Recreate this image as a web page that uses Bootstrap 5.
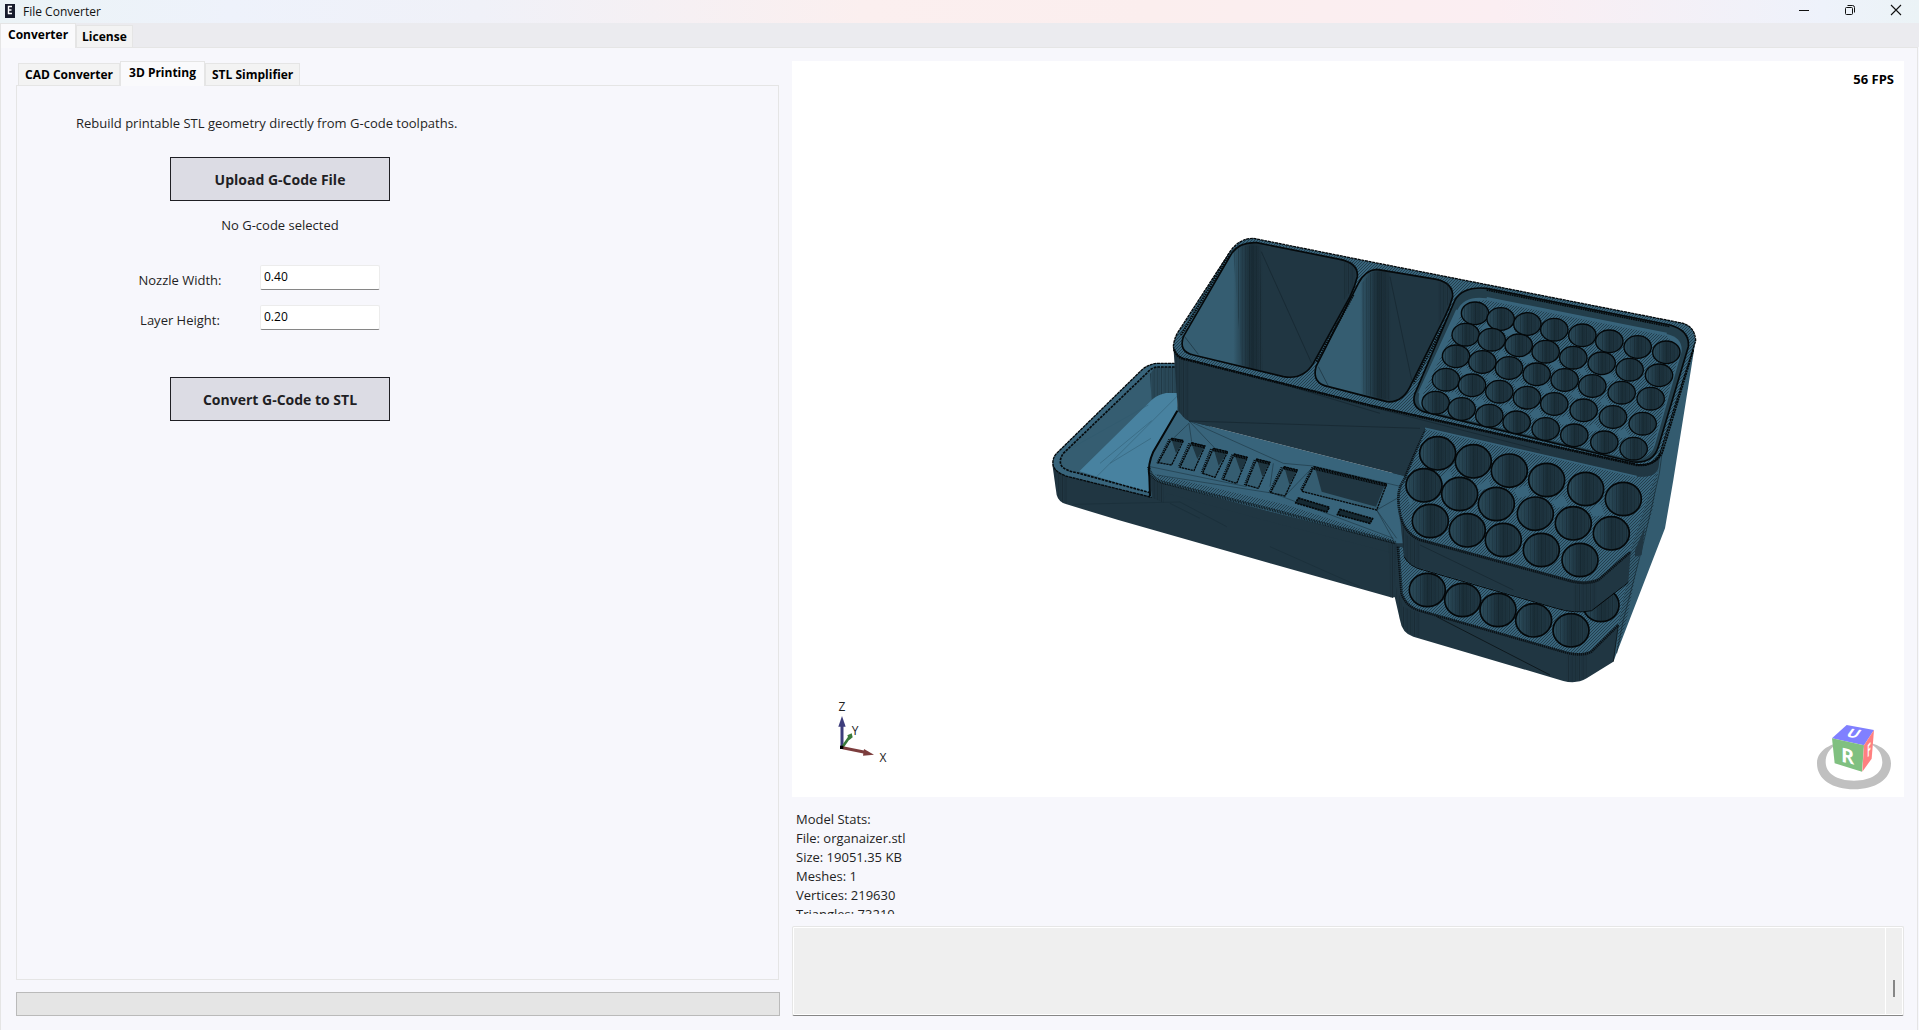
<!DOCTYPE html>
<html lang="en">
<head>
<meta charset="utf-8">
<meta name="viewport" content="width=device-width, initial-scale=1">
<title>File Converter</title>
<link href="https://cdn.jsdelivr.net/npm/bootstrap@5.3.0/dist/css/bootstrap.min.css" rel="stylesheet">
<style>
  body { font-family: "Open Sans", "Noto Sans", sans-serif; font-size: 13px; line-height: 19px; color: #1f1f24; background: #f7f7fc; }
  .title-bar { height: 23px; font-size: 12px; color: #111; background: linear-gradient(90deg, #ebf3f6 0%, #eef2fb 12%, #f0f1f8 25%, #fbefef 45%, #fbeeee 60%, #fbeef2 78%, #eef2fb 95%, #ebf3f6 100%); }
  .window-btn { width: 46px; height: 20px; padding: 0; border: 0; background: none; display: grid; place-items: center; }
  .tab-strip { background: #ebebef; }
  .tab-list { border: 0; }
  .tab-list .nav-link { height: 22px; padding: 0 5px; border: 1px solid #e5e5e5; border-bottom: 0; border-radius: 0; background: #f3f3f3; color: #000; font-size: 12px; font-weight: 700; line-height: 22px; }
  .tab-list .nav-link.active { height: 25px; padding: 0 7px; background: #fafafc; color: #000; margin-bottom: -1px; position: relative; }
  .tool-tabs { padding-left: 2px; }
  .tool-tabs .nav-link { padding: 0 6px; }
  .tool-tabs .nav-link.active { padding: 0 8px; }
  .page-pane { border: 1px solid #e5e5e5; padding: 13px 13px 14px 15px; margin-right: 1px; }
  .work-area { display: grid; grid-template-columns: 764fr 1112fr; gap: 12px; }
  .tool-pane { border: 1px solid #e5e5e5; margin: 0 1px 12px 0; padding: 28px 59px; }
  .tool-stack { width: 408px; }
  .tool-btn { width: 220px; height: 44px; border: 1px solid #1f1f24; border-radius: 0; background: #dcdce4; color: #1f1f24; font-size: 14px; font-weight: 700; padding: 0; }
  .tool-btn:hover { background: #cfcfda; color: #1f1f24; }
  .file-status { margin-top: 15px; text-align: center; }
  .field-group { display: grid; gap: 15px; margin: 30px 0 47px 44px; }
  .field-row { display: grid; grid-template-columns: 120px 120px; gap: 20px; }
  .field-row label { padding-top: 6px; text-align: center; }
  .field-row .form-control { height: 25px; padding: 0 3px 3px; font-size: 12px; line-height: 19px; color: #000; border: 1px solid #ececec; border-bottom-color: #868686; border-radius: 2px; }
  .tool-progress { height: 24px; border: 1px solid #bababa; border-radius: 0; background: #e5e5e5; }
  .viewer { background: #fff; display: grid; grid-template-rows: minmax(0, 1fr); }
  .fps { top: 9px; right: 10px; color: #000; }
  .stats { height: 117px; padding: 13px 4px 0; }
  .log-box { height: 90px; resize: none; overflow: hidden; border: 1px solid #e6e6e6; border-bottom-color: #868686; border-radius: 2px; background: #efefef; box-shadow: inset 0 0 0 1px #fff; }
  .log-box:disabled { background: #efefef; }
  .log-scroll { top: 6px; right: 1px; bottom: 2px; width: 18px; border-left: 1px solid #fff; }
  .log-thumb { width: 2px; height: 17px; margin: 52px 0 0 7px; background: #868686; }
</style>
<script src="https://cdn.jsdelivr.net/npm/bootstrap@5.3.0/dist/js/bootstrap.bundle.min.js"></script>
</head>
<body class="min-vh-100 d-flex flex-column">

<header class="title-bar d-flex align-items-start">
  <svg class="ms-1 me-2 mt-1" width="11" height="15" viewBox="0 0 11 15" aria-hidden="true"><rect x="1" width="10" height="14" fill="#171c2c"/><path d="M8 2.500H4.500V9.500H8M4.500 6H7.500" fill="none" stroke="#fff" stroke-width="1.400"/></svg>
  <span class="me-auto align-self-center">File Converter</span>
  <button class="window-btn" aria-label="Minimize"><svg width="12" height="12" viewBox="0 0 12 12"><path d="M1 6.500H11" stroke="#111"/></svg></button>
  <button class="window-btn" aria-label="Restore"><svg width="12" height="12" viewBox="0 0 12 12" fill="none" stroke="#111"><rect x="1.500" y="3.500" width="7" height="7" rx="1"/><path d="M3.500 1.500H8.500Q10.500 1.500 10.500 3.500V8.500"/></svg></button>
  <button class="window-btn" aria-label="Close"><svg width="12" height="12" viewBox="0 0 12 12"><path d="M1 1L11 11M11 1L1 11" stroke="#111" stroke-width="1.100"/></svg></button>
</header>

<nav class="tab-strip">
  <ul class="nav tab-list align-items-end">
    <li class="nav-item"><a class="nav-link active" href="#converter">Converter</a></li>
    <li class="nav-item"><a class="nav-link" href="#license">License</a></li>
  </ul>
</nav>

<main class="page-pane flex-grow-1 d-flex flex-column" id="converter">
  <div class="work-area flex-grow-1">

    <section class="d-flex flex-column">
      <ul class="nav tab-list tool-tabs align-items-end">
        <li class="nav-item"><a class="nav-link" href="#cad">CAD Converter</a></li>
        <li class="nav-item"><a class="nav-link active" href="#printing">3D Printing</a></li>
        <li class="nav-item"><a class="nav-link" href="#simplifier">STL Simplifier</a></li>
      </ul>
      <div class="tool-pane flex-grow-1" id="printing">
        <p class="mb-4">Rebuild printable STL geometry directly from G-code toolpaths.</p>
        <form class="tool-stack d-flex flex-column">
          <button type="button" class="btn tool-btn align-self-center">Upload G-Code File</button>
          <div class="file-status">No G-code selected</div>
          <div class="field-group">
            <div class="field-row">
              <label for="nozzle">Nozzle Width:</label>
              <input class="form-control" id="nozzle" value="0.40">
            </div>
            <div class="field-row">
              <label for="layer">Layer Height:</label>
              <input class="form-control" id="layer" value="0.20">
            </div>
          </div>
          <button type="button" class="btn tool-btn align-self-center">Convert G-Code to STL</button>
        </form>
      </div>
      <div class="progress tool-progress" role="progressbar" aria-label="Conversion progress" aria-valuenow="0" aria-valuemin="0" aria-valuemax="100"></div>
    </section>

    <section class="d-flex flex-column">
      <div class="viewer flex-grow-1 position-relative">
        <svg class="w-100 h-100" viewBox="792 61 1112 736" role="img" aria-label="3D view of organaizer.stl">
          <defs>
            <pattern id="grain" width="9" height="9" patternUnits="userSpaceOnUse"><path d="M0 0h3v3h-3zM6 3h3v3h-3zM3 6h3v3h-3z" fill="#0d1a21" opacity=".5"/></pattern>
            <pattern id="ribs" width="11" height="200" patternUnits="userSpaceOnUse"><path d="M1.500 0V200" stroke="#0c161b" stroke-width="2" opacity=".5"/><path d="M7.500 0V200" stroke="#0c161b" stroke-width="1.500" opacity=".3"/></pattern>
            <linearGradient id="well"><stop offset="0" stop-color="#2f5262"/><stop offset=".3" stop-color="#24404e"/><stop offset=".5" stop-color="#1b303a"/><stop offset="1" stop-color="#223b48"/></linearGradient>
            <linearGradient id="side1" gradientUnits="userSpaceOnUse" x1="580" x2="670" y1="0" y2="0"><stop offset="0" stop-color="#355d71"/><stop offset=".15" stop-color="#2d4f60"/><stop offset=".6" stop-color="#1a2d37"/><stop offset="1" stop-color="#203642"/></linearGradient>
            <linearGradient id="side2" gradientUnits="userSpaceOnUse" x1="960" x2="1055" y1="0" y2="0"><stop offset="0" stop-color="#355d71"/><stop offset=".15" stop-color="#2d4f60"/><stop offset=".6" stop-color="#1a2d37"/><stop offset="1" stop-color="#203642"/></linearGradient>
            <g id="s"><ellipse rx="41" ry="34" fill="url(#well)"/><ellipse rx="41" ry="34" fill="url(#ribs)" stroke="#04080a" stroke-width="4"/></g>
            <g id="b"><ellipse rx="54" ry="50" fill="url(#well)"/><ellipse rx="54" ry="50" fill="url(#ribs)" stroke="#04080a" stroke-width="5"/></g>
          </defs>

          <g transform="translate(1040 220) scale(.3333333)" stroke-linejoin="round">
            <!-- side tray and base front -->
            <path d="M1060 700L1130 600H1170V1000H1085L1066 1132L1050 1130Z" fill="#203642"/>
            <path d="M404 430H350Q320 434 300 455L50 700Q35 716 38 740L50 825Q56 847 80 853L235 900L690 1030L1060 1134L1070 960L413 560Z" fill="#203642"/>
            <path d="M404 430H350Q320 434 300 455L50 700Q35 716 40 738Q48 760 85 770L335 832L412 570Z" fill="#38647b"/>
            <path d="M404 440H355Q335 440 320 460L70 700Q55 722 65 738Q75 752 110 758L330 818V740L412 565V440Z" fill="#355d71"/>
            <path d="M345 442H412V522L335 540L330 462Z" fill="#2b4b5b"/><path d="M345 442H412V522L335 540L330 462Z" fill="url(#ribs)"/>
            <path d="M412 519H378Q350 525 335 540L118 754L330 818V740L412 572Z" fill="#4882a0"/>
            <path d="M412 528L168 772M335 602L180 730M333 655L210 730M75 695L325 555" stroke="#2f596e" stroke-width="1.500" fill="none"/>
            <path d="M404 430H350Q320 434 300 455L50 700Q35 716 40 738Q48 760 85 770L335 832" fill="none" stroke="#05090b" stroke-width="4" stroke-dasharray="9 2"/>
            <path d="M404 441H355Q335 441 320 460L70 700Q55 722 65 738Q75 752 110 758L330 818" fill="none" stroke="#05090b" stroke-width="5" stroke-dasharray="8 3"/>
            <path d="M40 745L50 825Q56 847 80 853V772Z" fill="url(#ribs)"/>

            <!-- base deck -->
            <path d="M412 572L447 603L1090 767L1110 780V970H1070L690 875L380 800L335 830Q326 790 326 740Q328 720 340 695Z" fill="#38647b"/>
            <path d="M328 760Q340 785 390 795L690 875L1070 972L1060 1000L690 905L380 820L370 845L335 830Z" fill="#203642"/>
            <path d="M326 740Q332 780 380 790L690 868L1066 968" fill="none" stroke="#05090b" stroke-width="10" stroke-dasharray="3 2" opacity=".75"/>
            <path d="M412 572L340 695Q322 735 328 770L330 828" fill="none" stroke="#05090b" stroke-width="6"/>
            <path d="M332 775L372 795V850L340 835Z" fill="url(#ribs)"/>
            <path d="M345 762L740 855L1060 958V968L690 870L370 790Z" fill="url(#grain)"/>
            <path d="M447 603L525 685M447 603L730 730L820 738L1085 800M447 610L400 655M447 610L455 665M820 740L735 828M1040 792L1010 870L1070 955M1010 870L1060 960M1080 830L1010 870M447 603L1020 735M350 765L700 820L1060 955M330 740L620 800M700 730L690 800M100 853L420 846L560 920M690 980L960 1100M390 850L480 895" fill="none" stroke="#172a34" stroke-width="1.500"/>
            <g fill="#355d71" stroke="#05090b" stroke-width="4" stroke-dasharray="7 2">
              <path d="M395 655L430 662L395 735L355 728Z"/><path d="M455 668L495 678L462 752L420 742Z"/><path d="M520 685L563 695L525 772L488 760Z"/><path d="M583 702L622 712L590 790L550 778Z"/><path d="M650 717L690 727L655 805L618 795Z"/><path d="M732 740L772 750L735 828L692 818Z"/>
              <path d="M822 740L1040 792L1010 870L785 814Z"/>
            </g>
            <path d="M395 660L427 667L408 700ZM455 673L492 683L472 717ZM522 690L560 700L536 737ZM585 707L620 717L602 755ZM652 722L687 732L667 770ZM734 745L769 755L748 793Z" fill="#1f3641"/>
            <path d="M827 750L1034 797L1008 860L845 815Z" fill="#203642"/>
            <path d="M395 658L430 664M455 672L495 681M520 689L563 698M583 706L622 715M650 721L690 730M732 744L772 753M822 745L1040 796" stroke="#05090b" stroke-width="9" stroke-dasharray="4 1" fill="none"/>
            <path d="M388 658L352 730M448 670L416 742M513 687L484 760M577 704L546 778M644 720L614 795M725 742L688 818M817 742L782 812" stroke="#05090b" stroke-width="6" stroke-dasharray="3 3" fill="none"/>
            <path d="M775 834L868 862L860 876L767 849ZM900 868L998 896L990 910L892 884Z" fill="#152831" stroke="#05090b" stroke-width="5" stroke-dasharray="7 2"/>
            <path d="M1046 972L1070 965L1060 1134H1050Z" fill="url(#ribs)"/>
          </g>

          <g transform="translate(1370 260) scale(.3333333)" stroke-linejoin="round">
            <!-- right side of the body -->
            <path d="M977 240L910 660L885 805L730 1205L700 900L860 590Z" fill="#335b6f"/>
            <path d="M900 400L868 640L820 850L760 1080L740 1180" stroke="#172a34" stroke-width="2" fill="none"/>
            <path d="M865 630L815 745L780 880L745 1100L740 1180L770 1080L810 880L850 740Z" fill="url(#grain)"/>
            <path d="M825 800L795 870V890L815 885Z" fill="#203642"/>
          </g>

          <g transform="translate(1370 420) scale(.3333333)" stroke-linejoin="round">
            <!-- lower tier -->
            <path d="M82 370L74 530L90 600Q96 640 130 650L580 783Q620 793 650 775L730 725L745 615L700 560L150 440Z" fill="#203642"/>
            <path d="M84 380L95 520Q108 558 150 570L590 695Q640 706 665 690L745 612L772 480L400 420Z" fill="#38647b"/>
            <path d="M84 380L95 520Q108 558 150 570L590 695Q640 706 665 690L745 612L772 480L400 420Z" fill="url(#grain)"/>
            <use href="#b" x="172" y="510"/><use href="#b" x="278" y="540"/><use href="#b" x="384" y="570"/><use href="#b" x="491" y="601"/><use href="#b" x="603" y="631"/><use href="#b" x="693" y="555"/>
            <path d="M84 380L95 520Q108 560 150 572L590 698Q640 710 665 694L745 615" fill="none" stroke="#05090b" stroke-width="8" stroke-dasharray="4 2" opacity=".8"/>
            <path d="M590 705H650V772Q620 790 590 782ZM80 500L100 560L150 580V652Q96 640 90 600L76 530Z" fill="url(#ribs)"/>
            <path d="M745 615L730 725M200 590L540 765" stroke="#05090b" stroke-width="2" fill="none"/>
            <!-- middle tier -->
            <path d="M84 230L102 410Q120 440 160 448L560 563Q615 580 665 570L775 485L782 395L640 420L120 330Z" fill="#203642"/>
            <path d="M165 25L102 180Q78 210 88 270Q98 335 150 355L590 475Q645 492 685 475L782 390L862 150L800 165Z" fill="#38647b"/>
            <path d="M165 25L102 180Q78 210 88 270Q98 335 150 355L590 475Q645 492 685 475L782 390L862 150L800 165Z" fill="url(#grain)"/>
            <path d="M200 180L240 150L250 180L220 190ZM315 205L355 175L365 205L330 210ZM430 210L470 195L480 225L445 235ZM545 245L580 225L595 255L560 265ZM660 270L690 250L705 285L670 290ZM105 190L130 240L120 260Z" fill="#38647b"/>
            <use href="#b" x="203" y="100"/><use href="#b" x="310" y="124"/><use href="#b" x="418" y="152"/><use href="#b" x="530" y="180"/><use href="#b" x="647" y="207"/><use href="#b" x="760" y="237"/>
            <use href="#b" x="162" y="196"/><use href="#b" x="269" y="222"/><use href="#b" x="379" y="252"/><use href="#b" x="496" y="281"/><use href="#b" x="610" y="310"/><use href="#b" x="724" y="340"/>
            <use href="#b" x="181" y="303"/><use href="#b" x="292" y="331"/><use href="#b" x="400" y="360"/><use href="#b" x="514" y="390"/><use href="#b" x="630" y="420"/>
            <path d="M165 25L102 180Q78 210 88 270Q98 338 150 360L590 480Q645 497 685 480L782 395" fill="none" stroke="#05090b" stroke-width="8" stroke-dasharray="4 2" opacity=".8"/>
            <path d="M610 495L680 485V565Q640 578 610 573ZM88 290L110 345L150 365V445Q120 440 102 410Z" fill="url(#ribs)"/>
            <path d="M102 410Q120 442 160 450L560 565Q615 582 665 572L775 487" fill="none" stroke="#05090b" stroke-width="3"/>
            <path d="M150 375L430 510" stroke="#111f26" stroke-width="1.500"/>
          </g>

          <g transform="translate(1040 220) scale(.3333333)" stroke-linejoin="round">
            <!-- upper box -->
            <path d="M400 380L413 560Q425 595 447 603L1090 767L1155 625L1790 770Q1850 775 1856 740L1862 690L1780 700L990 530Z" fill="#203642"/>
            <path d="M402 400L413 560Q425 595 447 603V425Z" fill="url(#ribs)"/>
            <path d="M447 603L1140 625M990 560L1500 690M620 460L1020 580" stroke="#111f26" stroke-width="1.500" fill="none"/>
            <path d="M1155 625L1790 770" stroke="#38647b" stroke-width="5"/>
            <path d="M400 380Q402 355 415 335L570 95Q598 55 640 55L990 125L1930 310Q1965 322 1967 362L1860 700Q1845 740 1790 733L990 555L430 415Q404 405 400 380Z" fill="#38647b"/>
            <path d="M400 380Q402 355 415 335L570 95Q598 55 640 55L990 125L1930 310Q1965 322 1967 362L1860 700Q1845 740 1790 733L990 555L430 415Q404 405 400 380Z" fill="url(#grain)" stroke="#05090b" stroke-width="4" stroke-dasharray="9 2"/>
            <path d="M402 388Q410 412 432 417L990 557L1790 735Q1842 740 1860 700" fill="none" stroke="#05090b" stroke-width="7" stroke-dasharray="5 2"/>
            <path d="M430 350L575 100Q600 65 650 68L900 118Q956 130 952 170Q945 200 930 230L820 430Q790 480 730 470L460 405Q415 395 430 350Z" fill="url(#side1)" stroke="#05090b" stroke-width="5"/>
            <path d="M580 100L605 77H660L668 455L605 436Z" fill="url(#ribs)"/><path d="M912 125H945V195L912 240Z" fill="url(#ribs)"/>
            <path d="M664 95L815 430M430 345L475 403" stroke="#111f26" stroke-width="1.500"/>
            <path d="M955 190Q975 150 1010 148L1190 178Q1240 190 1238 230Q1230 260 1215 290L1115 490Q1090 550 1040 545L865 500Q815 490 828 440Z" fill="url(#side2)" stroke="#05090b" stroke-width="5"/>
            <path d="M965 190L995 155H1045L1050 540L970 522Z" fill="url(#ribs)"/><path d="M1195 185H1230V240L1195 315Z" fill="url(#ribs)"/>
            <path d="M1050 170L1115 480M835 440L865 498" stroke="#111f26" stroke-width="1.500"/>
            <path d="M423 345L568 103M940 225L830 425M1225 290L1120 490" stroke="#05090b" stroke-width="7" stroke-dasharray="4 3"/>
          </g>

          <g transform="translate(1370 260) scale(.3333333)" stroke-linejoin="round">
            <!-- small wells of the upper box -->
            <path d="M255 120Q280 78 350 85L900 195Q960 212 955 260L865 560Q850 610 790 606L160 455Q122 440 135 400Z" fill="#233e4b" stroke="#05090b" stroke-width="5"/>
            <path d="M262 150Q285 105 350 115L890 222Q938 232 935 275L855 555Q840 600 790 600L165 450Q140 440 148 400Z" fill="#38647b"/>
            <path d="M290 130L345 120L890 228L930 275L850 555Q840 600 790 600L165 450Q150 440 160 400Z" fill="url(#grain)"/>
            <path d="M350 115L890 222M262 150L148 400" stroke="#38647b" stroke-width="8"/>
            <path d="M330 205L350 185L370 210L345 215ZM400 215L425 200L445 230L420 235ZM380 280L400 270L410 295L390 300ZM450 295L475 280L495 305L470 310ZM540 310L560 300L575 325L555 330ZM625 330L640 320L655 345L635 345ZM270 330L285 315L305 340L280 345ZM345 350L365 340L385 360L360 365ZM430 370L450 360L465 385L440 385ZM510 380L530 370L545 400L520 400ZM600 400L620 390L635 415L610 415ZM690 350L720 335L740 360L710 365ZM690 420L705 410L720 435L695 435ZM230 400L255 395L270 415L245 420ZM310 425L335 415L350 435L325 440ZM395 440L415 430L435 455L405 455ZM480 460L505 445L520 475L490 475ZM565 475L590 465L605 490L575 495ZM650 500L675 490L690 510L660 515ZM740 515L765 505L780 530L750 535Z" fill="#38647b"/>
            <use href="#s" x="315" y="160"/><use href="#s" x="392" y="177"/><use href="#s" x="472" y="192"/><use href="#s" x="553" y="209"/><use href="#s" x="637" y="226"/><use href="#s" x="718" y="244"/><use href="#s" x="803" y="261"/><use href="#s" x="889" y="277"/>
            <use href="#s" x="287" y="224"/><use href="#s" x="365" y="239"/><use href="#s" x="446" y="256"/><use href="#s" x="527" y="275"/><use href="#s" x="610" y="293"/><use href="#s" x="695" y="310"/><use href="#s" x="779" y="329"/><use href="#s" x="867" y="346"/>
            <use href="#s" x="258" y="289"/><use href="#s" x="337" y="306"/><use href="#s" x="417" y="324"/><use href="#s" x="500" y="343"/><use href="#s" x="584" y="360"/><use href="#s" x="667" y="378"/><use href="#s" x="755" y="398"/><use href="#s" x="842" y="416"/>
            <use href="#s" x="228" y="359"/><use href="#s" x="306" y="376"/><use href="#s" x="388" y="395"/><use href="#s" x="471" y="413"/><use href="#s" x="553" y="432"/><use href="#s" x="641" y="451"/><use href="#s" x="729" y="471"/><use href="#s" x="818" y="491"/>
            <use href="#s" x="197" y="428"/><use href="#s" x="275" y="447"/><use href="#s" x="358" y="467"/><use href="#s" x="440" y="487"/><use href="#s" x="527" y="507"/><use href="#s" x="613" y="526"/><use href="#s" x="703" y="547"/><use href="#s" x="791" y="566"/>
            <path d="M970 270L878 575Q860 618 800 614" fill="none" stroke="#05090b" stroke-width="5" stroke-dasharray="6 2"/>
            <path d="M350 90L900 200" stroke="#05090b" stroke-width="5" stroke-dasharray="5 2"/>
          </g>

          <!-- axis marker -->
          <g transform="translate(780 680) scale(.3333333)">
            <path d="M186 202V135" stroke="#3d3d7c" stroke-width="9"/><path d="M186 108L197 140H175Z" fill="#3d3d7c"/>
            <path d="M188 200L208 172" stroke="#3a7a3a" stroke-width="8"/><path d="M202 166L215 160L218 172L208 180Z" fill="#3a7a3a"/>
            <path d="M188 203L255 217" stroke="#7c3d3d" stroke-width="9"/><path d="M252 207L282 224L249 227Z" fill="#7c3d3d"/>
            <rect x="180" y="197" width="10" height="10" fill="#000"/>
          </g>
          <g font-size="12" fill="#222" text-anchor="middle"><text x="842" y="711">Z</text><text x="855" y="735">Y</text><text x="883" y="762">X</text></g>

          <!-- view cube -->
          <g transform="translate(1700 680) scale(.3333333)">
            <path d="M351 250C351 160 573 160 573 250C573 300 525 328 462 328S351 300 351 250ZM377 246C377 280 410 302 462 302S547 280 547 246C547 160 377 160 377 246Z" fill="#c0c0c0" fill-rule="evenodd"/>
            <path d="M440 135L522 150L492 196L396 175Z" fill="#8080ff"/>
            <path d="M396 175L492 196L486 275L404 250Z" fill="#80c080"/>
            <path d="M522 150L515 236L487 275L492 196Z" fill="#ff8080"/>
            <g fill="#fff" font-weight="700" text-anchor="middle">
              <text transform="matrix(1 .24 0 1 443 249)" font-size="60">R</text>
              <text transform="matrix(1 .15 -.5 .7 453 172)" font-size="48">U</text>
              <text transform="matrix(.4 -.5 0 1 507 227)" font-size="50">F</text>
            </g>
          </g>
        </svg>
        <strong class="fps position-absolute">56 FPS</strong>
      </div>
      <div class="stats overflow-hidden">
        <div>Model Stats:</div>
        <div>File: organaizer.stl</div>
        <div>Size: 19051.35 KB</div>
        <div>Meshes: 1</div>
        <div>Vertices: 219630</div>
        <div>Triangles: 73210</div>
      </div>
      <div class="position-relative mt-2 pt-1">
        <textarea class="form-control log-box" aria-label="Log" disabled></textarea>
        <div class="log-scroll position-absolute"><div class="log-thumb"></div></div>
      </div>
    </section>
  </div>
</main>
</body>
</html>
